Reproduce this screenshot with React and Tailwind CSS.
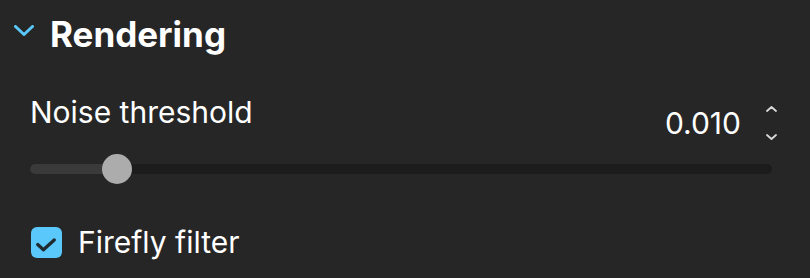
import React from 'react';

const Chevron = ({ className }) => (
  <svg className={className} viewBox="0 0 20 11" fill="none">
    <path d="M1.5 1.5 L10 9.5 L18.5 1.5" stroke="currentColor" strokeWidth="3" strokeLinecap="round" strokeLinejoin="round" />
  </svg>
);

const Spinner = () => (
  <div className="flex flex-col items-center justify-between h-[36px] w-[11px] py-[1px] text-[#d8d8d8]">
    <svg width="11" height="6" viewBox="0 0 11 6" fill="none">
      <path d="M1 5 L5.5 1 L10 5" stroke="currentColor" strokeWidth="1.8" strokeLinecap="round" strokeLinejoin="round" />
    </svg>
    <svg width="11" height="6" viewBox="0 0 11 6" fill="none">
      <path d="M1 1 L5.5 5 L10 1" stroke="currentColor" strokeWidth="1.8" strokeLinecap="round" strokeLinejoin="round" />
    </svg>
  </div>
);

export default function App() {
  const pct = 11.7;

  return (
    <div className="w-[810px] h-[278px] bg-[#262626] text-white font-['Inter','Noto_Sans',sans-serif] overflow-hidden">
      <div className="flex items-center pt-[14px] pl-[14px]">
        <Chevron className="w-[20px] h-[11px] text-[#5ac8fa] mt-[-7px]" />
        <h2 className="ml-[16px] text-[35px] leading-[40px] font-bold">Rendering</h2>
      </div>

      <div className="pl-[30px] pr-[36px] mt-[40px]">
        <div className="flex justify-between items-start">
          <span className="text-[30px] leading-[36px]">Noise threshold</span>
          <div className="flex items-center gap-[25px] mt-[11px] -mr-[3px]">
            <span className="text-[30px] leading-[36px]">0.010</span>
            <Spinner />
          </div>
        </div>

        <div className="relative h-[30px] mt-[13px] flex items-center">
          <div className="w-[742px] h-[10px] rounded-full bg-[#1c1c1c] overflow-hidden">
            <div className="h-full bg-[#3a3a3a]" style={{ width: `${pct}%` }} />
          </div>
          <div
            className="absolute top-0 w-[30px] h-[30px] -ml-[15px] rounded-full bg-[#acacac]"
            style={{ left: `${(742 * pct) / 100}px` }}
          />
        </div>

        <label className="flex items-center mt-[40px] ml-[1px]">
          <span className="w-[31px] h-[31px] rounded-[6px] bg-[#5ac8fa]">
            <svg width="31" height="31" viewBox="0 0 30 30" fill="none">
              <path d="M6.5 17 L12 22 L22.5 12.5" stroke="#1e2a30" strokeWidth="3.2" strokeLinecap="round" strokeLinejoin="round" />
            </svg>
          </span>
          <span className="ml-[16px] text-[30px] leading-[36px]">Firefly filter</span>
        </label>
      </div>
    </div>
  );
}
